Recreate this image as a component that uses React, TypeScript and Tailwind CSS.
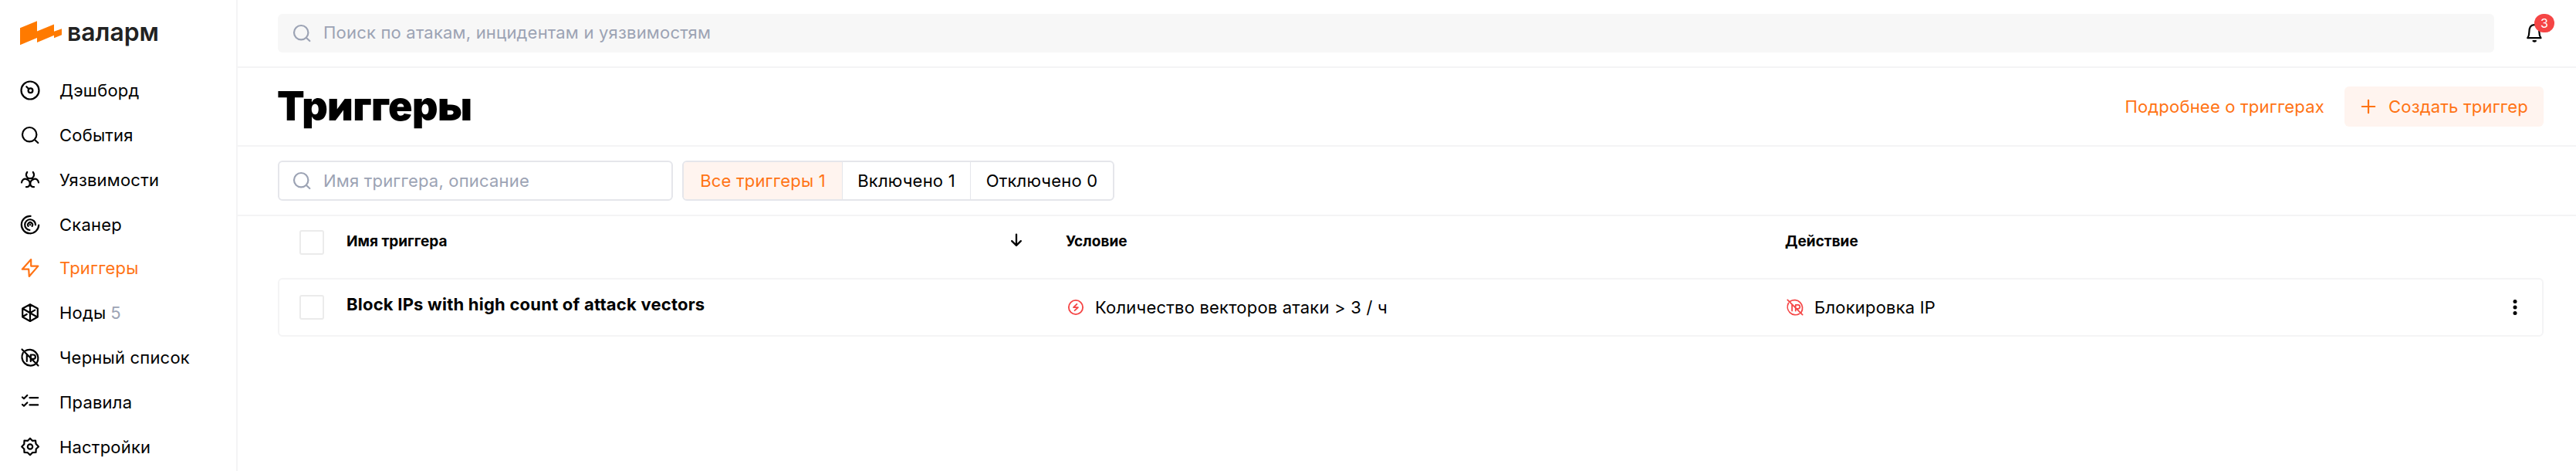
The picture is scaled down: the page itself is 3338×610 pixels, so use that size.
import type { ReactNode } from "react";

type IconProps = { className?: string; children: ReactNode; size?: number; stroke?: number };

function Icon({ className = "", children, size = 26, stroke = 2.2 }: IconProps) {
  return (
    <svg
      width={size}
      height={size}
      viewBox="0 0 26 26"
      fill="none"
      stroke="currentColor"
      strokeWidth={stroke}
      strokeLinecap="round"
      strokeLinejoin="round"
      className={`shrink-0 ${className}`}
    >
      {children}
    </svg>
  );
}

const DashboardGlyph = (
  <>
    <circle cx="13" cy="13" r="11.5" />
    <circle cx="13.5" cy="13.3" r="2.9" />
    <path d="M11.300 11.200 8.300 8.200" />
  </>
);
const SearchGlyph = (
  <>
    <circle cx="12.2" cy="12.2" r="9.2" />
    <path d="m19 19 4.300 4" />
  </>
);
const BiohazardGlyph = (
  <path d="M9.200 2.800C6.600 6.400 8.400 11.200 13 11.200S19.400 6.400 16.800 2.800M2 16.500c.4-3.500 3-5.300 5.800-4.700 3.200.6 5.200 3.600 4.900 6.500-.2 2.300-2 3.700-4.700 3.900M24 16.500c-.4-3.500-3-5.300-5.800-4.700-3.200.6-5.200 3.600-4.900 6.500.2 2.300 2 3.700 4.700 3.900" />
);
const ScannerGlyph = (
  <path d="M13.600 1.900A11.200 11.200 0 1 0 24.200 13.500M12.400 20A6.900 6.900 0 1 1 20 13.200M10.600 14.800A3 3 0 1 1 15.600 14.800M13 13.200h.1" />
);
const BoltGlyph = <path d="M14.200 2 2.800 14.700h8.400L11.800 24 23.400 10.600h-9.200z" />;
const NodesGlyph = (
  <path d="M13 2.200 22.800 7.500v11L13 24 3.200 18.500v-11zM13 2.500V23.500M4 8l18 10.500M14 12.600l5.200-3M3.500 18 8.700 15" />
);
const NoIpGlyph = (
  <path d="M2.500 2.500 23.500 23.500M6.200 4.600A11.200 11.200 0 0 1 21.700 20M3.800 7A11.200 11.200 0 0 0 19.300 22M8.800 9.500v8.500M13.800 18v-8.500h3.400a2.700 2.700 0 0 1 0 5.400H14.500" />
);
const RulesGlyph = (
  <path d="m3 6.500 2 1.800 4.300-4.300M3 16l2 1.800 4.300-4.300M12.500 7.200h10.700M12.500 16.400h10.700" />
);
const GearGlyph = (
  <>
    <circle cx="13" cy="12.500" r="3.200" />
    <path d="M13 1.700 15.900 4.800 20 4.500 20.500 8.700 24 12.500 20.700 15.500 20.500 20 16 20.200 13 23.300 9.800 20.200 5.500 20 5.300 15.500 2.200 12.500 5.300 9.300 5.500 4.500 10 4.800z" />
  </>
);

type NavItem = { label: string; glyph: ReactNode; active?: boolean; count?: number };

const NAV: NavItem[] = [
  { label: "Дэшборд", glyph: DashboardGlyph },
  { label: "События", glyph: SearchGlyph },
  { label: "Уязвимости", glyph: BiohazardGlyph },
  { label: "Сканер", glyph: ScannerGlyph },
  { label: "Триггеры", glyph: BoltGlyph, active: true },
  { label: "Ноды", glyph: NodesGlyph, count: 5 },
  { label: "Черный список", glyph: NoIpGlyph },
  { label: "Правила", glyph: RulesGlyph },
  { label: "Настройки", glyph: GearGlyph },
];

function Logo() {
  return (
    <div className="flex h-[60px] items-start pl-[26px] pt-[27px]">
      <svg width="54" height="32" viewBox="0 0 54 32" className="shrink-0">
        <path
          d="M0 9.300 22 .2v13.300L44 4.500v9.300l10-3.600v8L44 22.300v-3.600L22 28v-6L0 31.300z"
          fill="#ff7a00"
        />
      </svg>
      <svg width="124" height="40" viewBox="0 0 124 40" className="-mt-[4px] ml-[6px] shrink-0 overflow-visible">
        <text
          x="1"
          y="30"
          textLength="119"
          lengthAdjust="spacingAndGlyphs"
          fontSize="33"
          fontWeight="600"
          fill="#222222"
          fontFamily="Inter, sans-serif"
          letterSpacing="0"
        >
          валарм
        </text>
      </svg>
    </div>
  );
}

function Sidebar() {
  return (
    <aside className="flex w-[308px] shrink-0 flex-col border-r-2 border-[#f4f4f5]">
      <Logo />
      <nav className="flex flex-col pt-[28px]">
        {NAV.map((item) => (
          <a
            key={item.label}
            className={`flex items-center pl-[26px] ${item.active ? "-mt-[2px] h-[58px] text-[#ff7314]" : "h-[58px] text-black"}`}
          >
            <Icon>{item.glyph}</Icon>
            <span className="ml-[25px] whitespace-nowrap">
              {item.label}
              {item.count !== undefined && <span className="ml-[6px] text-[#9ca3b4]">{item.count}</span>}
            </span>
          </a>
        ))}
      </nav>
    </aside>
  );
}

function Checkbox() {
  return <span className="block size-[32px] shrink-0 rounded-[3px] border-2 border-[#ebebeb]" />;
}

function TopBar() {
  return (
    <div className="flex h-[88px] shrink-0 items-start border-b-2 border-[#f4f4f5] pl-[52px] pt-[18px]">
      <div className="flex h-[50px] w-[2872px] items-center rounded-[6px] bg-[#f7f7f7] pl-[18px] text-[#9ca3b4]">
        <Icon>{SearchGlyph}</Icon>
        <span className="mb-[2px] ml-[15px]">Поиск по атакам, инцидентам и уязвимостям</span>
      </div>
      <div className="relative ml-[40px] mt-[12px]">
        <Icon className="text-black">
          <path d="M3.200 19.200h17.300c-1.700-2.200-2.100-4.200-2.100-7.500C18.400 5.500 16 2.200 11.900 2.200S5.300 5.500 5.300 11.700c0 3.300-.4 5.300-2.100 7.500z" />
          <path d="M10.500 23q1.700 1.400 3.400 0z" />
        </Icon>
        <span className="absolute -top-[12px] left-[12px] flex h-[24px] w-[26px] items-center justify-center rounded-full bg-[#f54545] text-[16px] leading-none text-white">
          3
        </span>
      </div>
    </div>
  );
}

function TitleBar() {
  return (
    <div className="flex h-[102px] shrink-0 items-center border-b-2 border-[#f4f4f5] pl-[51px] pr-[42px]">
      <h1 className="text-[52px] font-black leading-[60px] tracking-[-0.6px] text-black">Триггеры</h1>
      <a className="ml-auto text-[#ff7314]">Подробнее о триггерах</a>
      <button className="ml-[26px] flex h-[52px] w-[258px] items-center rounded-[6px] bg-[#fff4ef] pl-[18px] text-[#ff7314]">
        <Icon>
          <path d="M13 4.800v16.400M4.800 13h16.400" />
        </Icon>
        <span className="ml-[13px] whitespace-nowrap">Создать триггер</span>
      </button>
    </div>
  );
}

function FilterBar() {
  return (
    <div className="flex h-[90px] shrink-0 items-center gap-[12px] border-b-2 border-[#f4f4f5] pl-[52px]">
      <div className="flex h-[52px] w-[512px] items-center rounded-[6px] border-2 border-[#e5e6eb] pl-[16px] text-[#9ca3b4]">
        <Icon>{SearchGlyph}</Icon>
        <span className="ml-[15px]">Имя триггера, описание</span>
      </div>
      <div className="flex h-[52px] w-[560px] overflow-hidden rounded-[6px] border-2 border-[#e5e6eb] whitespace-nowrap">
        <button className="w-[206px] border-r border-[#e5e6eb] bg-[#fff4ef] text-[#ff7314]">Все триггеры 1</button>
        <button className="w-[166px] border-r border-[#e5e6eb]">Включено 1</button>
        <button className="flex-1">Отключено 0</button>
      </div>
    </div>
  );
}

function TriggerTable() {
  return (
    <div className="flex flex-col pl-[52px] pr-[42px]">
      <div className="flex h-[80px] items-start pl-[28px] pt-[18px] text-[19px] font-bold tracking-normal">
        <Checkbox />
        <div className="ml-[29px] flex w-[932px]">
          <span className="leading-[30px]">Имя триггера</span>
          <Icon className="ml-auto mr-[52px] mt-[1px]" size={24} stroke={2.5}>
            <path d="M13 5v15.500M6.700 14.200 13 20.500l6.300-6.300" />
          </Icon>
        </div>
        <span className="w-[932px] leading-[30px]">Условие</span>
        <span className="leading-[30px]">Действие</span>
      </div>
      <div className="flex h-[76px] items-center rounded-[6px] border-2 border-[#f4f4f5] pl-[26px]">
        <Checkbox />
        <span className="-mt-[8px] ml-[28px] w-[932px] pl-[1px] font-bold tracking-[0.22px]">
          Block IPs with high count of attack vectors
        </span>
        <div className="flex w-[932px] items-center">
          <Icon className="ml-[2px] text-[#f54545]" size={24} stroke={2}>
            <circle cx="13" cy="13" r="9.9" />
            <path d="M14.500 8.500 9.800 13.200h6.400L11.500 17.500" />
          </Icon>
          <span className="ml-[13px]">Количество векторов атаки &gt; 3 / ч</span>
        </div>
        <div className="flex items-center">
          <Icon className="ml-[2px] text-[#f54545]" size={24} stroke={1.9}>
            {NoIpGlyph}
          </Icon>
          <span className="ml-[13px]">Блокировка IP</span>
        </div>
        <svg width="6" height="22" viewBox="0 0 6 22" className="ml-auto mr-[32px]">
          <circle cx="3" cy="3.5" r="2.5" />
          <circle cx="3" cy="11" r="2.5" />
          <circle cx="3" cy="18.5" r="2.5" />
        </svg>
      </div>
    </div>
  );
}

export default function App() {
  return (
    <div className="flex h-[610px] w-[3338px] overflow-hidden bg-white font-['Inter',sans-serif] text-[22px] leading-[30px] tracking-[0.2px] text-black">
      <Sidebar />
      <main className="flex min-w-0 flex-1 flex-col">
        <TopBar />
        <TitleBar />
        <FilterBar />
        <TriggerTable />
      </main>
    </div>
  );
}
